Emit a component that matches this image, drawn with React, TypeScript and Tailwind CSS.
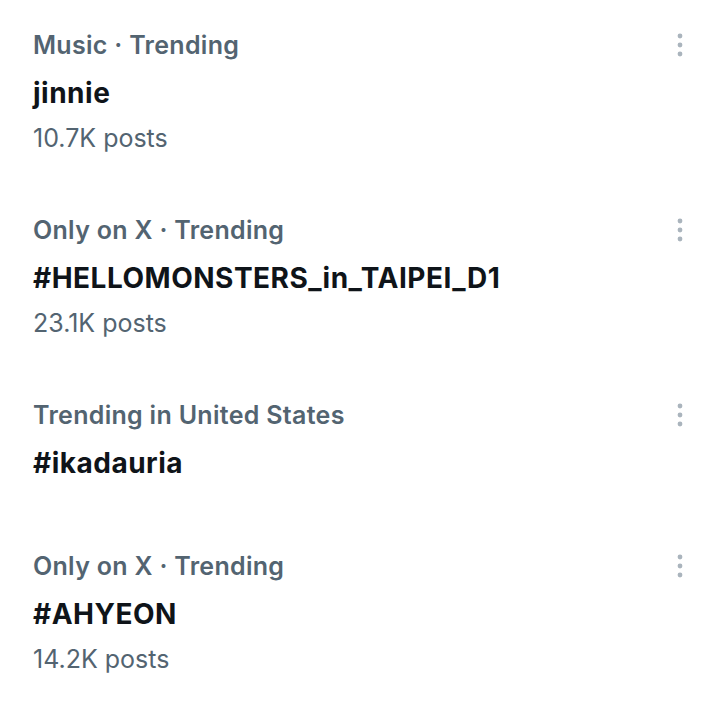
import React from "react";

type Trend = { category: string; title: string; posts?: string };

const trends: Trend[] = [
  { category: "Music · Trending", title: "jinnie", posts: "10.7K posts" },
  { category: "Only on X · Trending", title: "#HELLOMONSTERS_in_TAIPEI_D1", posts: "23.1K posts" },
  { category: "Trending in United States", title: "#ikadauria" },
  { category: "Only on X · Trending", title: "#AHYEON", posts: "14.2K posts" },
];

function Dots() {
  return (
    <svg width="8" height="26" viewBox="0 0 8 26" className="block">
      <circle cx="4" cy="4" r="2.4" fill="#aab4bd" />
      <circle cx="4" cy="13" r="2.4" fill="#aab4bd" />
      <circle cx="4" cy="22" r="2.4" fill="#aab4bd" />
    </svg>
  );
}

export default function App() {
  return (
    <div
      className="w-[720px] h-[709px] bg-white overflow-hidden pt-[21px]"
      style={{ fontFamily: "Inter, 'Noto Sans', sans-serif" }}
    >
      {trends.map((t, i) => (
        <div key={i} className={`flex pl-[33px] pr-[36px] ${t.posts ? "pb-[47px]" : "pb-[55px]"}`}>
          <div className="flex-1 flex flex-col">
            <div className="h-[48px] leading-[48px] text-[25px] font-semibold text-[#536471] tracking-[0.3px]">{t.category}</div>
            <div className="h-[48px] leading-[48px] text-[28px] font-bold text-[#0f1419] tracking-[0.5px]">{t.title}</div>
            {t.posts && (
              <div className="h-[42px] leading-[42px] text-[25px] text-[#536471]">{t.posts}</div>
            )}
          </div>
          <div className="pt-[11px]">
            <Dots />
          </div>
        </div>
      ))}
    </div>
  );
}
